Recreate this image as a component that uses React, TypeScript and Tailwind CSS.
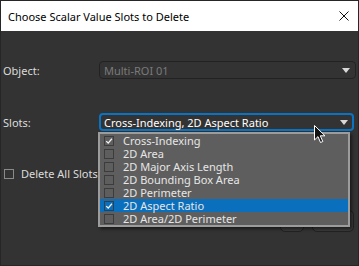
const items = [
  { label: "Cross-Indexing", checked: true },
  { label: "2D Area", checked: false },
  { label: "2D Major Axis Length", checked: false },
  { label: "2D Bounding Box Area", checked: false },
  { label: "2D Perimeter", checked: false },
  { label: "2D Aspect Ratio", checked: true, active: true },
  { label: "2D Area/2D Perimeter", checked: false },
];

function Check() {
  return (
    <svg viewBox="0 0 10 10" className="w-[10px] h-[10px]">
      <path d="M1.5 5.2 L4 7.6 L8.6 2.2" fill="none" stroke="#f2f2f2" strokeWidth="1.6" />
    </svg>
  );
}

function Arrow() {
  return (
    <svg viewBox="0 0 8 5" className="w-[8px] h-[5px]">
      <path d="M0 0 H8 L4 5 Z" fill="#d8d8d8" />
    </svg>
  );
}

export default function App() {
  return (
    <div
      className="relative w-[359px] h-[266px] border border-[#262626] bg-[#333333] flex flex-col overflow-hidden text-[11px] text-[#dcdcdc]"
      style={{ fontFamily: '"Noto Sans", "Segoe UI", sans-serif' }}
    >
      {/* title bar */}
      <div className="h-[30px] bg-white flex items-center justify-between pl-[7px] pr-[9px] text-black shrink-0">
        <span className="text-[11px] leading-none">Choose Scalar Value Slots to Delete</span>
        <svg viewBox="0 0 10 10" className="w-[10px] h-[10px]">
          <path d="M0.5 0.5 L9.5 9.5 M9.5 0.5 L0.5 9.5" stroke="#111" strokeWidth="1" />
        </svg>
      </div>

      <div className="flex flex-col pl-[2px] pr-[2px]">
        <div className="flex items-center mt-[30px] h-[18px]">
          <span className="w-[96px] leading-none">Object:</span>
          <div className="flex-1 h-[18px] rounded-[4px] border border-[#222222] flex items-center justify-between pl-[4px] pr-[5px]">
            <span className="text-[#7a7a7a] leading-none">Multi-ROI 01</span>
            <Arrow />
          </div>
        </div>

        <div className="flex items-center mt-[34px] h-[18px]">
          <span className="w-[96px] leading-none">Slots:</span>
          <div className="flex-1 mr-[2px] h-[18px] rounded-[4px] border-2 border-[#0a74c4] flex items-center justify-between pl-[3px] pr-[4px]">
            <span className="text-white leading-none">Cross-Indexing, 2D Aspect Ratio</span>
            <Arrow />
          </div>
        </div>

        <div className="flex items-center gap-[7px] mt-[37px] pl-[1px]">
          <div className="w-[10px] h-[10px] border border-[#8a8a8a]" />
          <span className="leading-none">Delete All Slots</span>
        </div>

        <div className="flex justify-end gap-[8px] mt-[31px] pr-[2px]">
          <div className="w-[24px] h-[22px] rounded-[5px] border border-[#222222] bg-[#3a3a3a] flex items-center justify-center text-[10px] text-[#999]">OK</div>
          <div className="w-[42px] h-[22px] rounded-[5px] border border-[#222222] bg-[#3a3a3a] flex items-center justify-center text-[10px] text-[#999]">Cancel</div>
        </div>
      </div>

      {/* open dropdown list */}
      <div className="absolute left-[97px] top-[131px] w-[252px] border-2 border-[#9c9c9c] bg-[#5e5e5e] shadow-[2px_2px_3px_rgba(0,0,0,0.5)]">
        {items.map((it) => (
          <div
            key={it.label}
            className={`h-[13px] flex items-center pl-[4px] gap-[9px] ${it.active ? "bg-[#0a6fbd]" : ""}`}
          >
            <div className={`w-[10px] h-[10px] border border-[#3c3c3c] flex items-center justify-center ${it.active ? "" : "bg-[#5e5e5e]"}`}>
              {it.checked && <Check />}
            </div>
            <span className="leading-[13px] text-[11px] text-[#e6e6e6]">{it.label}</span>
          </div>
        ))}
      </div>

      {/* mouse pointer */}
      <svg viewBox="0 0 12 19" className="absolute left-[313px] top-[124px] w-[12px] h-[19px]">
        <path d="M0.5 0.5 V15 L4 11.6 L6.5 17.5 L8.8 16.5 L6.3 10.8 H11 Z" fill="#111" stroke="#fff" strokeWidth="1" />
      </svg>
    </div>
  );
}
